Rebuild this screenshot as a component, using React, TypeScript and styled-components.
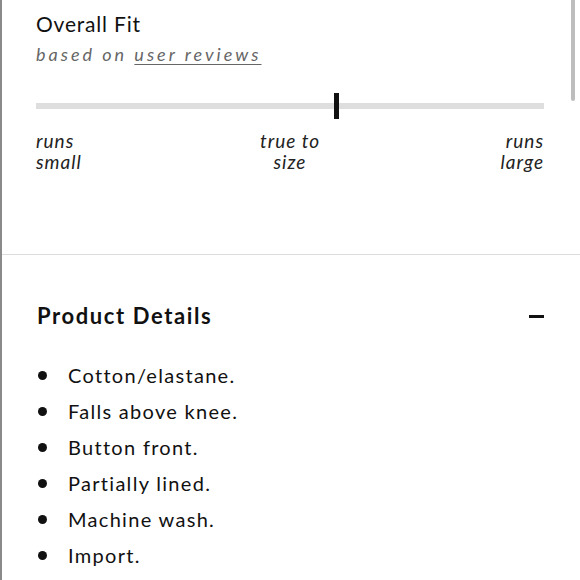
import React, { FunctionComponent } from "react";
import styled, { createGlobalStyle } from "styled-components";

const GlobalStyle = createGlobalStyle`
  html, body {
    margin: 0;
    padding: 0;
    background: #fff;
  }
  body {
    font-family: Lato, "Open Sans", sans-serif;
    color: #111;
  }
`;

const Page = styled.div`
  position: relative;
  width: 580px;
  height: 580px;
  box-sizing: border-box;
  border-left: 2px solid #8a8a8a;
  overflow: hidden;
`;

const ScrollThumb = styled.div`
  position: absolute;
  top: 0;
  right: 5px;
  width: 4px;
  height: 101px;
  border-radius: 0 0 2px 2px;
  background: #bdbdbd;
`;

const FitSection = styled.section`
  height: 255px;
  box-sizing: border-box;
  padding: 10px 36px 0 34px;
  border-bottom: 1px solid #dcdcdc;
`;

const Title = styled.h2`
  margin: 0;
  font-size: 21px;
  font-weight: 400;
  line-height: 27px;
  letter-spacing: 0.8px;
  color: #111;
`;

const Subtitle = styled.p`
  margin: 4px 0 0;
  font-size: 18px;
  font-style: italic;
  letter-spacing: 3px;
  line-height: 26px;
  color: #666;

  a {
    color: inherit;
    text-decoration: underline;
    text-underline-offset: 3px;
  }
`;

const Scale = styled.div`
  position: relative;
  margin-top: 25px;
  height: 28px;
  display: flex;
  align-items: center;
`;

const Track = styled.div`
  flex: 1;
  height: 6px;
  background: #dedede;
`;

const Marker = styled.div<{ at: number }>`
  position: absolute;
  top: 1px;
  left: ${({ at }) => at}%;
  width: 5px;
  height: 26px;
  background: #111;
`;

const Labels = styled.div`
  margin-top: 10px;
  display: grid;
  grid-template-columns: 1fr 1fr 1fr;
`;

const Label = styled.span<{ align: "left" | "center" | "right" }>`
  font-size: 19px;
  font-style: italic;
  line-height: 21px;
  letter-spacing: 1px;
  color: #222;
  text-align: ${({ align }) => align};
`;

const DetailsSection = styled.section`
  padding: 47px 36px 0 35px;
`;

const DetailsHeader = styled.div`
  display: flex;
  align-items: center;
  justify-content: space-between;
`;

const DetailsTitle = styled.h2`
  margin: 0;
  font-size: 22px;
  font-weight: 700;
  line-height: 28px;
  letter-spacing: 1.6px;
  color: #111;
`;

const Minus = styled.span`
  width: 15px;
  height: 3px;
  background: #111;
`;

const List = styled.ul`
  margin: 27px 0 0;
  padding: 0;
  list-style: none;
`;

const Item = styled.li`
  display: flex;
  align-items: center;
  height: 36px;
  font-size: 20px;
  letter-spacing: 1.3px;
  color: #111;

  &::before {
    content: "";
    width: 9px;
    height: 9px;
    margin: 0 21px 0 1px;
    border-radius: 50%;
    background: #111;
  }
`;

const details: string[] = [
  "Cotton/elastane.",
  "Falls above knee.",
  "Button front.",
  "Partially lined.",
  "Machine wash.",
  "Import.",
];

const App: FunctionComponent = () => {
  return (
    <>
      <GlobalStyle />
      <Page>
        <FitSection>
          <Title>Overall Fit</Title>
          <Subtitle>
            based on <a href="#reviews">user reviews</a>
          </Subtitle>
          <Scale>
            <Track />
            <Marker at={58.6} />
          </Scale>
          <Labels>
            <Label align="left">
              runs
              <br />
              small
            </Label>
            <Label align="center">
              true to
              <br />
              size
            </Label>
            <Label align="right">
              runs
              <br />
              large
            </Label>
          </Labels>
        </FitSection>
        <DetailsSection>
          <DetailsHeader>
            <DetailsTitle>Product Details</DetailsTitle>
            <Minus />
          </DetailsHeader>
          <List>
            {details.map((detail) => (
              <Item key={detail}>{detail}</Item>
            ))}
          </List>
        </DetailsSection>
        <ScrollThumb />
      </Page>
    </>
  );
};

export default App;
